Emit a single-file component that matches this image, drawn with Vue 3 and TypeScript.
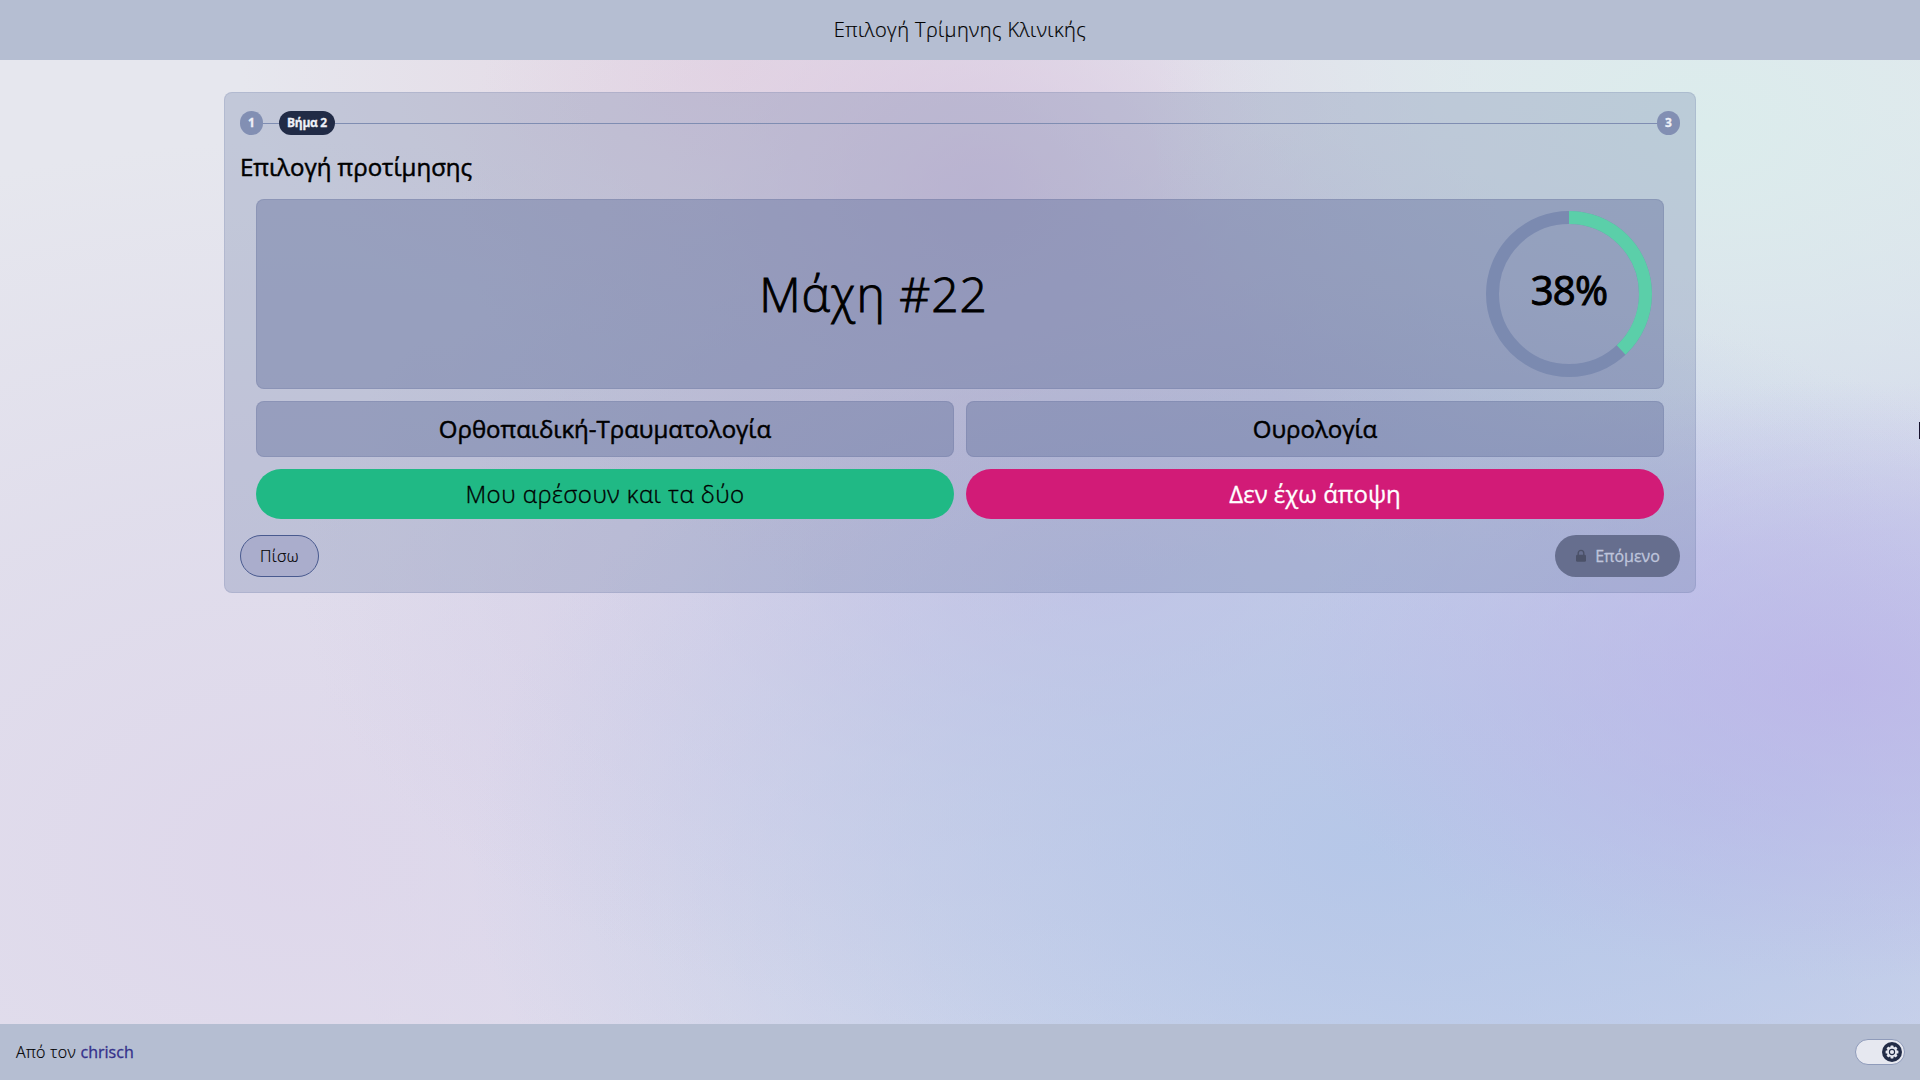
<script setup lang="ts">
import { computed } from 'vue'

const percent = 38
const battle = 22
const radius = 76.5
const circumference = 2 * Math.PI * radius
const dash = computed(() => `${(circumference * percent) / 100} ${circumference}`)
const choices: string[] = ['Ορθοπαιδική-Τραυματολογία', 'Ουρολογία']
const teeth: number[] = [0, 45, 90, 135, 180, 225, 270, 315]
</script>

<template>
  <div class="app">
    <header class="bar top"><span class="title">Επιλογή Τρίμηνης Κλινικής</span></header>
    <main>
      <section class="card">
        <div class="steps">
          <span class="step">1</span>
          <span class="line short"></span>
          <span class="step current"><span class="step-text">Βήμα 2</span></span>
          <span class="line"></span>
          <span class="step">3</span>
        </div>
        <h2><span class="heading-text">Επιλογή προτίμησης</span></h2>
        <div class="arena">
          <div class="panel battle">
            <div class="battle-name"><span>Μάχη #{{ battle }}</span></div>
            <svg class="ring" viewBox="0 0 166 166">
              <circle class="track" cx="83" cy="83" :r="radius" />
              <circle class="meter" cx="83" cy="83" :r="radius" :stroke-dasharray="dash" transform="rotate(-90 83 83)" />
              <text class="value" x="83" y="93.5" text-anchor="middle">{{ percent }}%</text>
            </svg>
          </div>
          <div class="row">
            <button v-for="choice in choices" :key="choice" class="panel choice"><span>{{ choice }}</span></button>
          </div>
          <div class="row">
            <button class="answer both"><span>Μου αρέσουν και τα δύο</span></button>
            <button class="answer none"><span>Δεν έχω άποψη</span></button>
          </div>
        </div>
        <div class="nav">
          <button class="back"><span>Πίσω</span></button>
          <button class="next" disabled>
            <svg class="lock" viewBox="0 0 12 14">
              <path d="M3.2 6V4.2a2.8 2.8 0 0 1 5.6 0V6" fill="none" stroke="currentColor" stroke-width="1.4" />
              <rect x="1" y="5.8" width="10" height="7" rx="1.4" fill="currentColor" />
            </svg>
            <span>Επόμενο</span>
          </button>
        </div>
      </section>
      <span class="edge"></span>
    </main>
    <footer class="bar bottom">
      <span class="credit">Από τον <a>chrisch</a></span>
      <span class="switch">
        <svg class="thumb" viewBox="0 0 20 20">
          <circle cx="10" cy="10" r="10" fill="#212b46" />
          <g fill="#e6e8f0">
            <rect v-for="angle in teeth" :key="angle" x="8.5" y="3.6" width="3" height="4" rx="0.6" :transform="`rotate(${angle} 10 10)`" />
            <circle cx="10" cy="10" r="5" />
          </g>
          <circle cx="10" cy="10" r="2.6" fill="#e6e8f0" stroke="#212b46" stroke-width="1.1" />
        </svg>
      </span>
    </footer>
  </div>
</template>

<style>
body { margin: 0; }
</style>

<style scoped>
* { box-sizing: border-box; }
.app {
  height: 1080px;
  display: flex;
  flex-direction: column;
  overflow: hidden;
  font-family: "Open Sans", "Noto Sans", sans-serif;
  font-weight: 400;
  color: #000;
  background:
    radial-gradient(ellipse 560px 300px at 1840px 680px, rgba(188, 178, 232, 0.75), rgba(188, 178, 232, 0.4) 50%, transparent),
    radial-gradient(ellipse 900px 560px at 1370px 850px, rgba(178, 198, 232, 0.85), rgba(180, 200, 232, 0.5) 50%, transparent),
    radial-gradient(ellipse 560px 420px at 1710px 130px, rgba(219, 236, 236, 1), rgba(219, 234, 236, 0.6) 50%, transparent),
    radial-gradient(ellipse 520px 420px at 980px 190px, rgba(212, 192, 222, 0.7), rgba(218, 202, 226, 0.35) 50%, transparent),
    radial-gradient(ellipse 500px 280px at 740px 70px, rgba(228, 209, 224, 0.75), transparent),
    radial-gradient(ellipse 800px 460px at 1100px 580px, rgba(200, 188, 226, 0.8), rgba(206, 198, 228, 0.45) 50%, transparent),
    radial-gradient(ellipse 1000px 720px at 300px 860px, rgba(220, 211, 234, 0.8), rgba(220, 214, 234, 0.55) 50%, transparent),
    radial-gradient(ellipse 1400px 700px at 1700px 800px, rgba(188, 196, 232, 0.9), transparent),
    #e6e7ee;
}
.bar { flex: none; display: flex; align-items: center; background: #b5bed2; }
.top { height: 60px; padding-bottom: 2px; justify-content: center; }
.title { font-size: 20px; }
.bottom { height: 56px; padding: 0 15px 0 16px; justify-content: space-between; font-size: 16px; }
.credit a { color: #34308a; font-weight: 400; letter-spacing: 0; -webkit-text-stroke: 0.3px #34308a; }
main { position: relative; flex: 1; padding: 32px 224px 0; }
.card {
  height: 501px;
  padding: 19px 16px 16px;
  border-radius: 8px;
  background: rgba(113, 128, 169, 0.3);
  box-shadow: inset 0 0 0 1px rgba(80, 95, 145, 0.13);
}
.steps { height: 24px; display: flex; align-items: center; font-size: 12px; font-weight: 700; color: #eef0f7; }
.step { width: 23px; height: 24px; padding-bottom: 1px; border-radius: 12px; background: #828fb3; display: flex; align-items: center; justify-content: center; -webkit-text-stroke: 0.3px #eef0f7; }
.current { width: 56px; background: #212b46; }
.step-text { white-space: nowrap; letter-spacing: -0.3px; }
.line { flex: 1; height: 1px; background: #7f8db2; }
.short { flex: 0 0 16px; }
h2 { margin: 16px 0 0; height: 32px; line-height: 32px; font-size: 24px; font-weight: 400; -webkit-text-stroke: 0.5px #000; }
.arena { margin: 16px 16px 0; display: flex; flex-direction: column; gap: 12px; }
.panel { border-radius: 8px; background: rgba(109, 122, 164, 0.5); box-shadow: inset 0 0 0 1px rgba(80, 95, 145, 0.16); }
.battle { height: 190px; padding: 12px; display: flex; gap: 12px; align-items: center; }
.battle-name { flex: 1; padding: 0 0 2px 5px; text-align: center; font-size: 48px; }
.ring { width: 166px; height: 166px; }
.track, .meter { fill: none; stroke-width: 13; }
.track { stroke: #7b8ab0; }
.meter { stroke: #5bcfa9; }
.value { font-size: 40px; font-weight: 400; letter-spacing: -0.7px; stroke: #000; stroke-width: 1; }
.row { display: grid; grid-template-columns: 1fr 1fr; gap: 12px; }
button { border: 0; padding: 0; font: inherit; color: inherit; display: flex; align-items: center; justify-content: center; }
.choice { height: 56px; padding-bottom: 2px; font-size: 24px; -webkit-text-stroke: 0.5px #000; }
.answer { height: 50px; padding-bottom: 2px; border-radius: 25px; font-size: 24px; }
.both { background: #20b985; }
.none { background: #d21b77; color: #fff; -webkit-text-stroke: 0.3px #fff; }
.nav { margin-top: 16px; display: flex; justify-content: space-between; }
.back { width: 79px; height: 42px; border-radius: 21px; background: #aaadcc; border: 1px solid #495a8f; font-size: 16px; }
.next { width: 125px; height: 42px; border-radius: 21px; background: #666e8e; color: #bfc5dc; font-size: 16px; gap: 8px; -webkit-text-stroke: 0.3px #bfc5dc; }
.lock { width: 12px; height: 14px; color: #4b5168; }
.switch { width: 50px; height: 26px; border-radius: 13px; background: #e6e8f0; border: 1px solid #8f9bba; display: flex; align-items: center; justify-content: flex-end; padding-right: 2px; }
.title, .credit, .battle-name, .both, .back { font-weight: 300; letter-spacing: 0.021em; -webkit-text-stroke: 0.2px #000; }
.battle-name { letter-spacing: 0.02em; -webkit-text-stroke-width: 0.9px; }
.both { -webkit-text-stroke-width: 0.35px; }
.thumb { width: 20px; height: 20px; }
.edge { position: absolute; right: 0; top: 362px; width: 1px; height: 17px; background: #17122e; }
</style>
